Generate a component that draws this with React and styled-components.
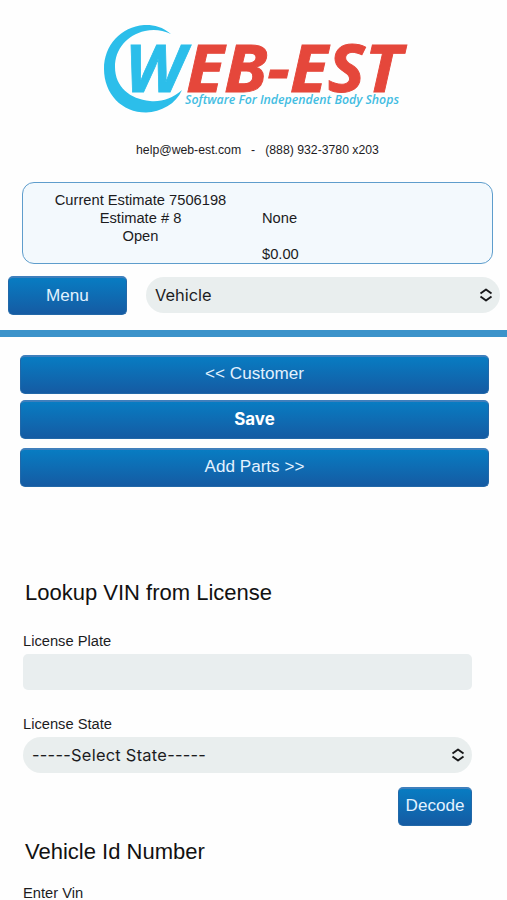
import React from "react";
import styled, { createGlobalStyle, css } from "styled-components";

const sans = `"Liberation Sans", Arial, sans-serif`;
const system = `Inter, "Liberation Sans", sans-serif`;

const GlobalStyle = createGlobalStyle`
  * {
    box-sizing: border-box;
  }

  body {
    margin: 0;
    background: #fefefe;
    color: #1c1c1e;
    font-family: ${sans};
  }
`;

const Page = styled.main`
  width: 507px;
  height: 900px;
  overflow: hidden;
`;

const Header = styled.header`
  display: flex;
  flex-direction: column;
  height: 337px;
  border-bottom: 7px solid #3c93ca;
`;

const LogoImage = styled.svg`
  display: block;
  flex: none;
  width: 507px;
  height: 120px;
`;

const LogoText = styled.text`
  font-family: "Open Sans", sans-serif;
  font-style: italic;
  font-weight: ${({ $tagline }) => ($tagline ? 600 : 700)};
  font-size: ${({ $tagline }) => ($tagline ? 11.8 : 67)}px;
`;

const Contact = styled.div`
  display: flex;
  justify-content: center;
  gap: 10px;
  margin-top: 22px;
  padding-left: 8px;
  font-size: 12.25px;
  line-height: 16px;
`;

const Estimate = styled.section`
  display: grid;
  grid-template-columns: 235px 1fr;
  flex: none;
  width: 471px;
  height: 82px;
  margin: 24px 0 0 22px;
  padding-top: 8px;
  border: 1px solid #5e9dcc;
  border-radius: 12px;
  background: #f3f9fd;
  font-size: 14.7px;
  line-height: 18.1px;
`;

const EstimateColumn = styled.div`
  display: flex;
  flex-direction: column;
  align-items: ${({ $centered }) => ($centered ? "center" : "flex-start")};
  padding: ${({ $offset }) => $offset || 0}px 0 0 ${({ $centered }) => ($centered ? 0 : 4)}px;
  gap: ${({ $gap }) => $gap || 0}px;
`;

const Button = styled.button`
  flex: none;
  width: ${({ $width }) => $width}px;
  height: 39px;
  padding: 0 0 2px;
  border: 1px solid #2268a8;
  border-top: 2px solid #3f7fbc;
  border-radius: 5px;
  background: linear-gradient(#087cc2, #155ba3);
  color: #e2f2ff;
  font-family: ${sans};
  font-size: 17.1px;
  line-height: 20px;

  ${({ $primary }) =>
    $primary &&
    css`
      color: #fff;
      font-family: ${system};
      font-size: 16.9px;
      font-weight: 700;
    `}
`;

const SelectBox = styled.div`
  display: flex;
  align-items: center;
  justify-content: space-between;
  width: ${({ $width }) => $width}px;
  height: 36px;
  padding: 0 7px 0 9px;
  border-radius: 18px;
  background: #e9eeee;
  font-family: ${system};
  font-size: 16.4px;
  white-space: nowrap;
`;

const SelectLabel = styled.span`
  letter-spacing: ${({ $spacing }) => $spacing || 0}px;
`;

const Navigation = styled.nav`
  display: flex;
  gap: 19px;
  margin: 12px 0 0 8px;

  ${Button} {
    padding: 0;
  }

  ${SelectBox} {
    margin-top: 1px;
  }
`;

const Actions = styled.div`
  display: flex;
  flex-direction: column;
  padding: 18px 0 0 20px;

  button + button {
    margin-top: 6px;
  }

  button:last-child {
    margin-top: 9px;
  }
`;

const Form = styled.form`
  display: flex;
  flex-direction: column;
  width: 449px;
  margin: 93px 0 0 23px;
`;

const Heading = styled.h2`
  margin: 0 0 0 2px;
  font-size: 22px;
  font-weight: 400;
  line-height: 26px;
  color: #111;
`;

const Label = styled.label`
  display: block;
  margin-top: ${({ $top }) => $top}px;
  font-size: 14.7px;
  line-height: 18px;
`;

const Input = styled.input`
  width: 100%;
  height: 36px;
  margin-top: 4px;
  padding: 0 9px;
  border: 0;
  border-radius: 5px;
  background: #e9eeef;
`;

const StateField = styled.div`
  margin-top: 4px;
`;

const DecodeRow = styled.div`
  display: flex;
  justify-content: flex-end;
  margin: 14px 0 13px;
`;

const Logo = () => (
  <LogoImage viewBox="0 0 507 120" role="img" aria-label="WEB-EST">
    <path
      d="M171 34C162 26 152 24.5 144 25C121 27 104 45 104 69C104 94 122 112.5 146 112.5C161 112 176 104 182 90C172 99 161 102 150 101C130 99 115 87 115 67C115 49 127 35 145 31C154 29 162 30 171 34Z"
      fill="#2cbeea"
    />
    <LogoText
      x="125"
      y="91.5"
      textLength="60"
      lengthAdjust="spacingAndGlyphs"
      fill="#2cbeea"
      stroke="#2cbeea"
      strokeWidth="0.8"
    >
      W
    </LogoText>
    <LogoText
      x="186"
      y="91.5"
      textLength="216"
      lengthAdjust="spacingAndGlyphs"
      fill="#e5473b"
      stroke="#e5473b"
      strokeWidth="0.9"
    >
      EB-EST
    </LogoText>
    <LogoText
      $tagline
      x="185"
      y="103.5"
      textLength="214"
      lengthAdjust="spacingAndGlyphs"
      fill="#43bde2"
    >
      Software For Independent Body Shops
    </LogoText>
  </LogoImage>
);

const Chevrons = () => (
  <svg width="14" height="14" viewBox="0 0 14 14" fill="none" stroke="#171719" strokeWidth="1.9">
    <path d="M1.5 5.5L7 1.5L12.5 5.5M1.5 8.5L7 12.5L12.5 8.5" strokeLinejoin="round" />
  </svg>
);

const Select = ({ children, width, spacing }) => (
  <SelectBox $width={width}>
    <SelectLabel $spacing={spacing}>{children}</SelectLabel>
    <Chevrons />
  </SelectBox>
);

const App = () => (
  <Page>
    <GlobalStyle />
    <Header>
      <Logo />
      <Contact>
        <span>help@web-est.com</span>
        <span>-</span>
        <span>(888) 932-3780 x203</span>
      </Contact>
      <Estimate>
        <EstimateColumn $centered>
          <span>Current Estimate 7506198</span>
          <span>Estimate # 8</span>
          <span>Open</span>
        </EstimateColumn>
        <EstimateColumn $offset={18.1} $gap={18.1}>
          <span>None</span>
          <span>$0.00</span>
        </EstimateColumn>
      </Estimate>
      <Navigation>
        <Button $width={119}>Menu</Button>
        <Select width={354}>Vehicle</Select>
      </Navigation>
    </Header>
    <Actions>
      <Button $width={469}>&lt;&lt; Customer</Button>
      <Button $width={469} $primary>
        Save
      </Button>
      <Button $width={469}>Add Parts &gt;&gt;</Button>
    </Actions>
    <Form>
      <Heading>Lookup VIN from License</Heading>
      <Label $top={26} htmlFor="plate">
        License Plate
      </Label>
      <Input id="plate" />
      <Label $top={25}>License State</Label>
      <StateField>
        <Select width={449} spacing={0.27}>
          -----Select State-----
        </Select>
      </StateField>
      <DecodeRow>
        <Button type="button" $width={74}>
          Decode
        </Button>
      </DecodeRow>
      <Heading>Vehicle Id Number</Heading>
      <Label $top={19}>Enter Vin</Label>
    </Form>
  </Page>
);

export default App;
